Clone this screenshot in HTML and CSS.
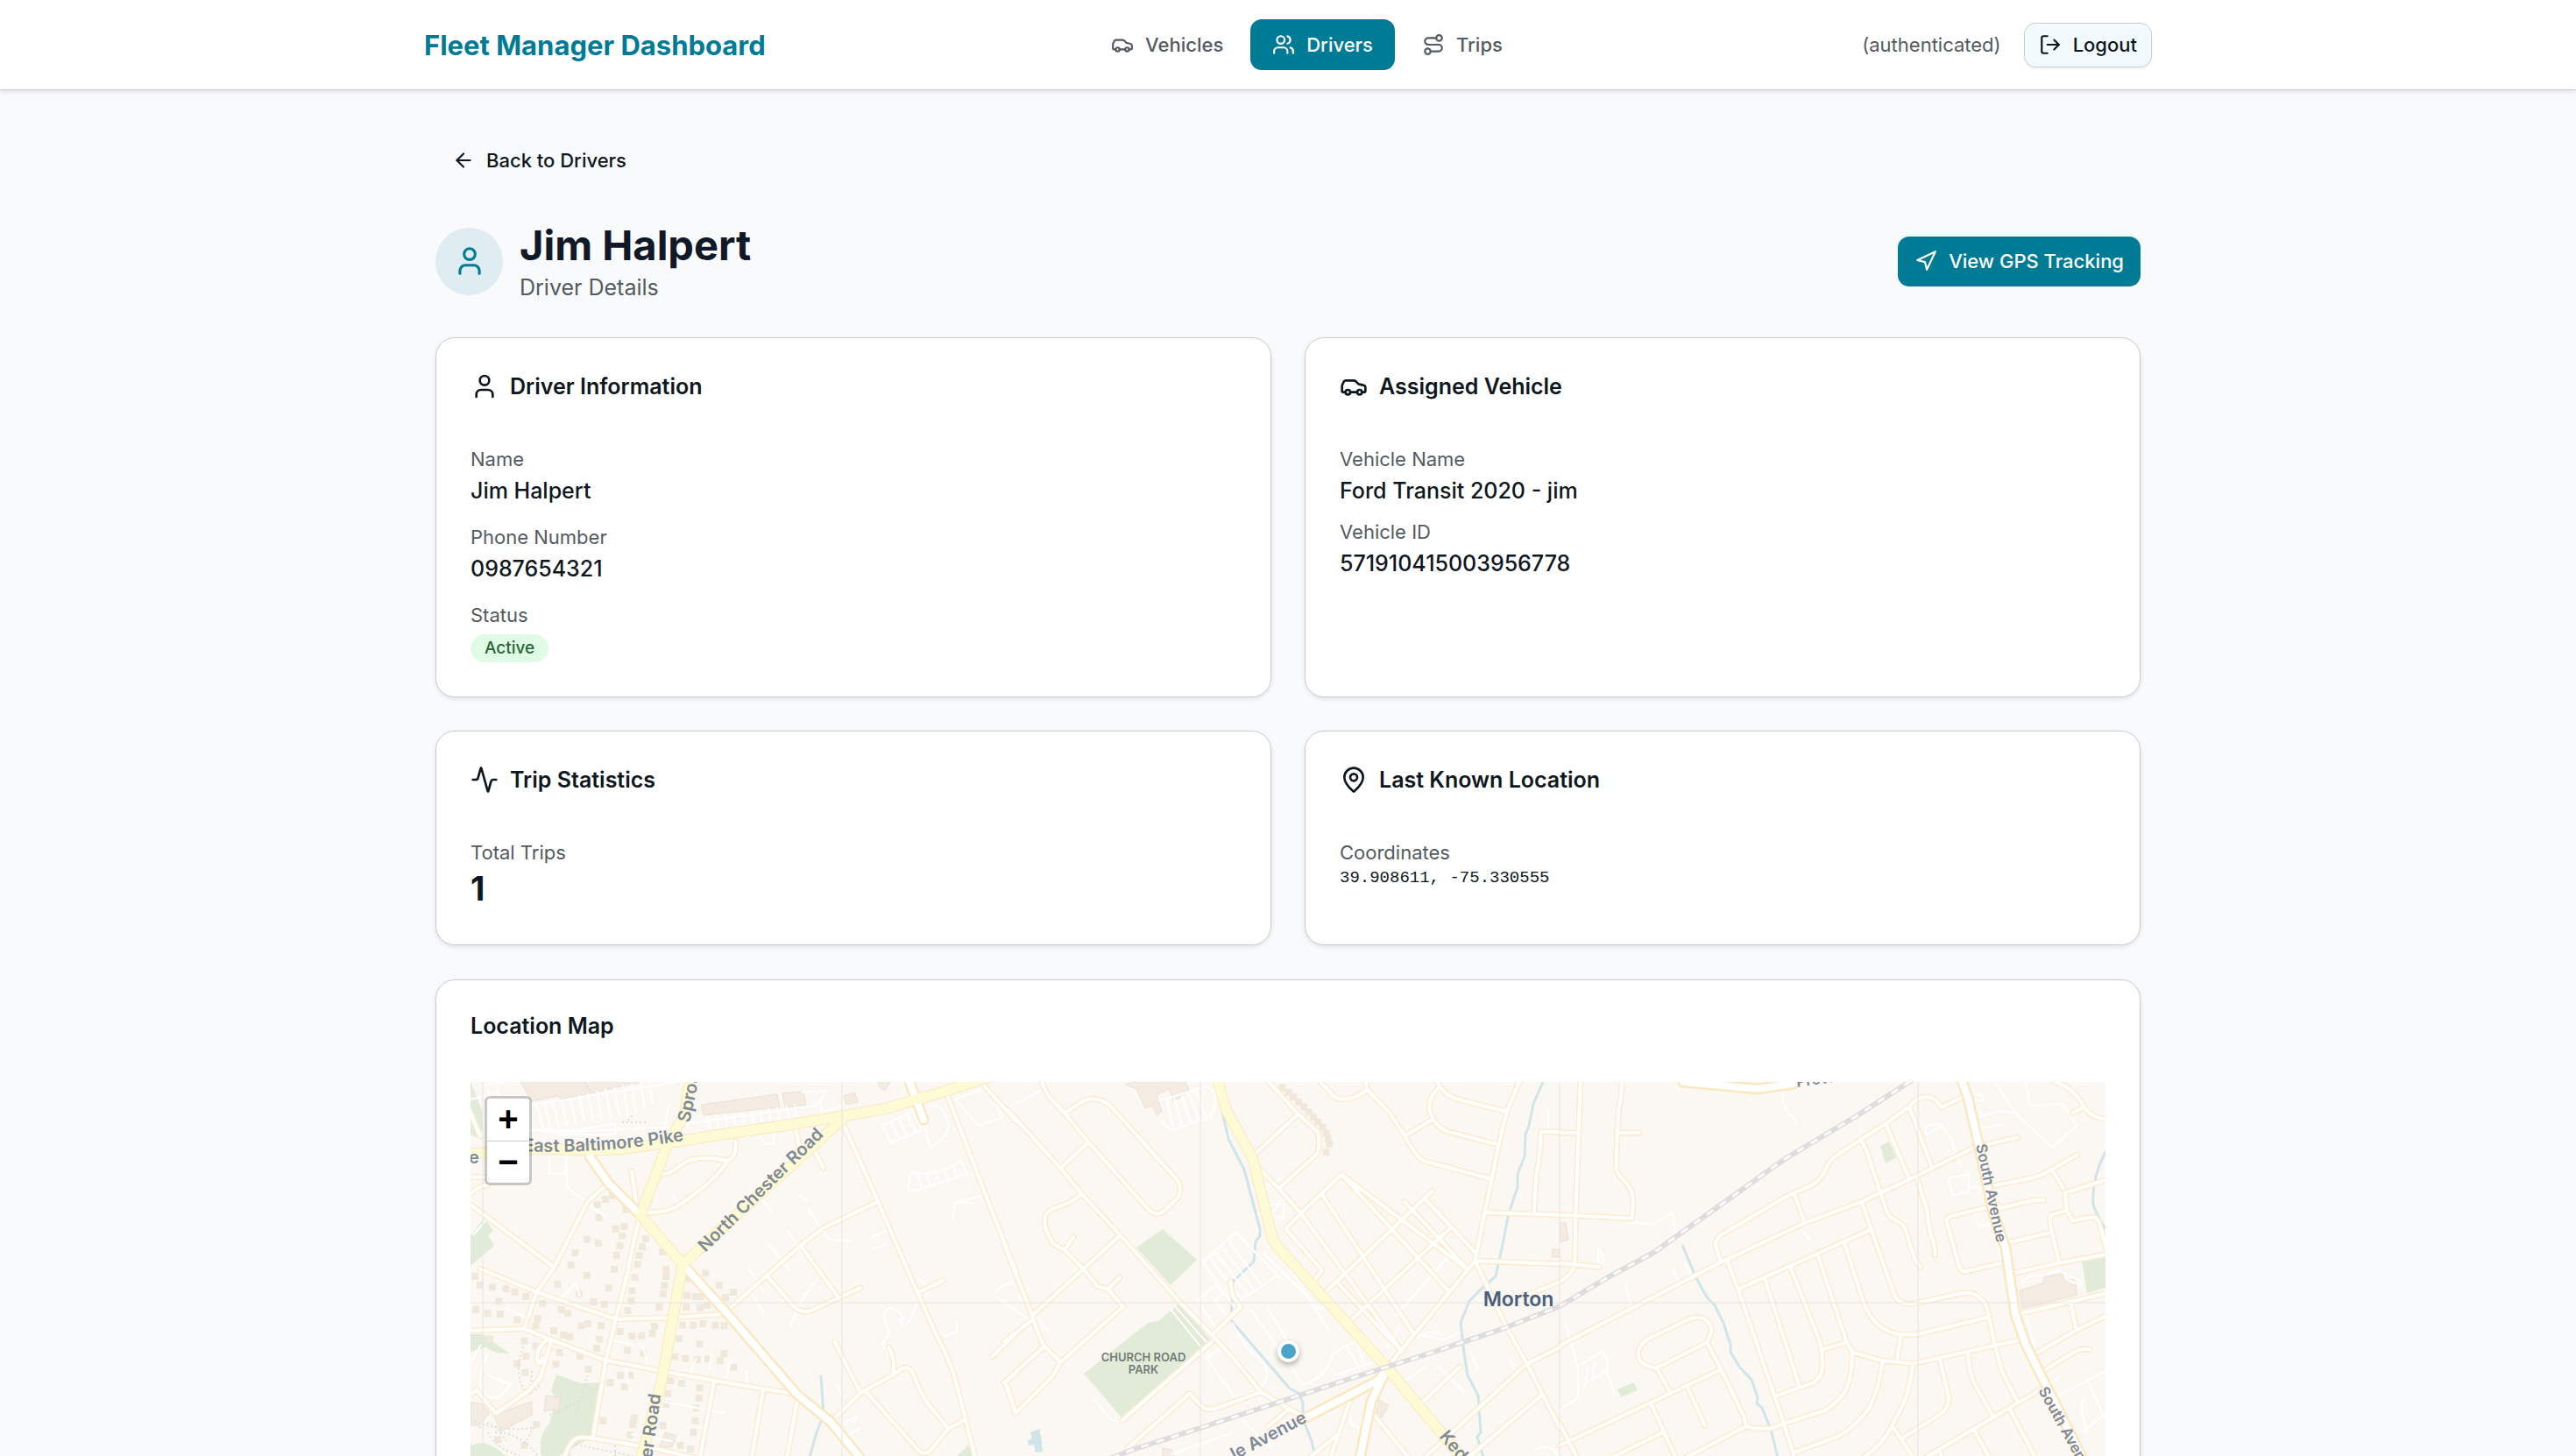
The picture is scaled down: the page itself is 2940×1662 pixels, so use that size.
FILE: index.html
```html
<!DOCTYPE html>
<html lang="en">
<head>
<meta charset="utf-8">
<meta name="viewport" content="width=device-width, initial-scale=1">
<title>Fleet Manager Dashboard</title>
<link rel="stylesheet" href="styles.css">
</head>
<body>
<svg class="sprite" aria-hidden="true">
  <symbol id="i-car" viewBox="0 0 24 24"><path d="M19 17h2c.6 0 1-.4 1-1v-3c0-.9-.7-1.7-1.5-1.9C18.7 10.6 16 10 16 10s-1.300-1.400-2.200-2.300c-.5-.4-1.100-.7-1.800-.7H5c-.6 0-1.100.4-1.400.9l-1.400 2.900A3.700 3.700 0 0 0 2 12v4c0 .6.4 1 1 1h2"/><circle cx="7" cy="17" r="2"/><path d="M9 17h6"/><circle cx="17" cy="17" r="2"/></symbol>
  <symbol id="i-users" viewBox="0 0 24 24"><path d="M16 21v-2a4 4 0 0 0-4-4H6a4 4 0 0 0-4 4v2"/><path d="M16 3.128a4 4 0 0 1 0 7.744"/><path d="M22 21v-2a4 4 0 0 0-3-3.870"/><circle cx="9" cy="7" r="4"/></symbol>
  <symbol id="i-route" viewBox="0 0 24 24"><circle cx="6" cy="19" r="3"/><path d="M9 19h8.500a3.500 3.500 0 0 0 0-7h-11a3.500 3.500 0 0 1 0-7H15"/><circle cx="18" cy="5" r="3"/></symbol>
  <symbol id="i-logout" viewBox="0 0 24 24"><path d="m16 17 5-5-5-5"/><path d="M21 12H9"/><path d="M9 21H5a2 2 0 0 1-2-2V5a2 2 0 0 1 2-2h4"/></symbol>
  <symbol id="i-back" viewBox="0 0 24 24"><path d="m12 19-7-7 7-7"/><path d="M19 12H5"/></symbol>
  <symbol id="i-user" viewBox="0 0 24 24"><path d="M19 21v-2a4 4 0 0 0-4-4H9a4 4 0 0 0-4 4v2"/><circle cx="12" cy="7" r="4"/></symbol>
  <symbol id="i-nav" viewBox="0 0 24 24"><polygon points="3 11 22 2 13 21 11 13 3 11"/></symbol>
  <symbol id="i-activity" viewBox="0 0 24 24"><path d="M22 12h-2.480a2 2 0 0 0-1.930 1.460l-2.350 8.360a.25.25 0 0 1-.48 0L9.240 2.180a.25.25 0 0 0-.48 0l-2.350 8.360A2 2 0 0 1 4.490 12H2"/></symbol>
  <symbol id="i-pin" viewBox="0 0 24 24"><path d="M20 10c0 4.993-5.539 10.193-7.399 11.799a1 1 0 0 1-1.202 0C9.539 20.193 4 14.993 4 10a8 8 0 0 1 16 0"/><circle cx="12" cy="10" r="3"/></symbol>
</svg>

<header class="topbar">
  <div class="topbar-inner">
    <div class="brand">Fleet Manager Dashboard</div>
    <nav class="nav" aria-label="Main">
      <a class="nav-link" href="#vehicles"><svg class="icon"><use href="#i-car"/></svg>Vehicles</a>
      <a class="nav-link active" href="#drivers" aria-current="page"><svg class="icon"><use href="#i-users"/></svg>Drivers</a>
      <a class="nav-link" href="#trips"><svg class="icon"><use href="#i-route"/></svg>Trips</a>
    </nav>
    <div class="account">
      <span class="auth">(authenticated)</span>
      <button class="btn btn-outline" type="button"><svg class="icon"><use href="#i-logout"/></svg>Logout</button>
    </div>
  </div>
</header>

<main class="page">
  <button class="btn btn-ghost" type="button"><svg class="icon"><use href="#i-back"/></svg>Back to Drivers</button>

  <div class="page-head">
    <div class="identity">
      <div class="avatar"><svg class="icon icon-xl"><use href="#i-user"/></svg></div>
      <div>
        <h1 class="name">Jim Halpert</h1>
        <p class="subtitle">Driver Details</p>
      </div>
    </div>
    <button class="btn btn-primary" type="button"><svg class="icon"><use href="#i-nav"/></svg>View GPS Tracking</button>
  </div>

  <div class="grid">
    <section class="card">
      <h2 class="card-title"><svg class="icon icon-lg"><use href="#i-user"/></svg>Driver Information</h2>
      <dl class="fields">
        <div><dt>Name</dt><dd>Jim Halpert</dd></div>
        <div><dt>Phone Number</dt><dd>0987654321</dd></div>
        <div><dt>Status</dt><dd class="status"><span class="badge">Active</span></dd></div>
      </dl>
    </section>

    <section class="card">
      <h2 class="card-title"><svg class="icon icon-lg"><use href="#i-car"/></svg>Assigned Vehicle</h2>
      <dl class="fields tight">
        <div><dt>Vehicle Name</dt><dd>Ford Transit 2020 - jim</dd></div>
        <div><dt>Vehicle ID</dt><dd>571910415003956778</dd></div>
      </dl>
    </section>

    <section class="card">
      <h2 class="card-title"><svg class="icon icon-lg"><use href="#i-activity"/></svg>Trip Statistics</h2>
      <dl class="fields">
        <div><dt>Total Trips</dt><dd class="big">1</dd></div>
      </dl>
    </section>

    <section class="card">
      <h2 class="card-title"><svg class="icon icon-lg"><use href="#i-pin"/></svg>Last Known Location</h2>
      <dl class="fields">
        <div><dt>Coordinates</dt><dd class="mono">39.908611, -75.330555</dd></div>
      </dl>
    </section>
  </div>

  <section class="card">
    <h2 class="card-title plain">Location Map</h2>
    <div class="map">
      <svg class="map-canvas" viewBox="0 0 1866 614" preserveAspectRatio="xMidYMid slice" role="img" aria-label="Street map around Morton">
        <defs>
          <g id="streets">
            <g transform="matrix(.4018 0 0 .3333 -7 -15)">
              <path d="M17 465L255 680M410 390L350 455L255 680L205 765L170 890M17 897L170 890L240 925L400 998L560 1035L710 1068L945 1115M45 685L205 765L430 857L590 852L742 840M500 500Q480 590 465 690L430 857L400 1010L365 1265M740 835L955 605L1020 545L1175 455M955 605L1060 780M860 710L940 820Q965 840 990 825L1125 750M500 495C560 490 590 490 630 450C690 400 730 350 748 315M555 358C590 370 610 320 650 310C690 300 730 310 748 315Q775 300 770 250M475 350L492 490M942 210L955 290M990 270L1020 340M1075 185L1175 455L1270 720L1340 910Q1385 1010 1400 1090L1450 1326M1370 85L1480 430L1568 700M1470 50L1568 180M1290 765L1360 725M1500 985L1568 905M1568 1040L1535 1075L1568 1180M1052 935L1125 1110M1040 1210L1125 1110L1215 1050L1245 1025Q1265 1020 1275 1045Q1295 1110 1315 1145L1375 1232M1205 955Q1225 990 1217 1050M1140 1105L1285 1300Q1305 1330 1325 1305L1375 1232L1425 1200M710 1068L668 1340M848 1105L815 1340M948 1120L915 1340M282 1340Q300 1265 330 1262L365 1265L540 1300L660 1335M235 928Q200 960 208 1000Q215 1020 222 990M246 935L215 1060L185 1100L90 1180L35 1100L17 1115M17 430Q40 400 66 398M17 370L65 373M10 130L45 230"/>
            </g>
            <g transform="matrix(.4018 0 0 .3333 613 -15)">
              <path d="M0 140L150 340L210 428L320 570L490 800L580 912L640 990L720 1107L800 1165L845 1195M98 45Q105 80 125 105L162 152L230 252L395 475Q425 515 450 480L485 440Q495 415 485 385L290 125Q245 85 205 118L162 152M230 252L150 340M210 428Q180 460 150 470Q110 485 107 505Q100 540 125 590Q130 605 162 620L215 685L255 745L285 755L328 815L150 1005L130 1050L22 1180L0 1090M320 570L70 845M162 620L187 575M285 755L318 715M-10 600L70 845Q85 910 105 950L150 1005M105 950L-10 1075M70 860L-10 935M632 730L640 780L662 815L580 912M742 45L825 155L880 215Q890 250 880 290L770 410M825 155L697 298M697 320L770 410L833 495L1120 968M888 45L930 98Q960 112 990 95L1022 73M1017 45L1022 73L1085 150L1128 230Q1150 285 1180 315L1375 378M1128 230L1205 175M1220 45L1228 62Q1190 100 1200 150Q1215 200 1250 215L1395 260M1228 62Q1250 95 1280 105L1418 147M1455 40L1418 147L1395 260L1375 378L1355 492L1328 658M833 495L948 362L1305 685M948 362L1090 548L1255 765M893 430L1155 910M833 495L790 548L893 690L865 732M905 762L1205 420M968 870L1258 545M1127 455L1225 580L1305 685M1185 445L1328 630M935 730L1120 968M1080 1020L1328 658L1415 880L1475 1010L1568 1230M1355 492L1568 500M1328 658L1568 668M1515 215H1568M1515 215Q1513 300 1502 360L1495 495M1568 730L1465 780M1568 955L1475 1010L1190 1326M1285 1020L1180 1140M1520 1115L1300 1340M580 935L325 1205M340 1300L517 1112L550 1155Q570 1175 600 1160L720 1107M800 1165L740 1225M975 1130L940 1250L915 1340M940 1250L850 1340M1040 1185L1145 1340"/>
            </g>
            <g transform="matrix(.43367 0 0 .3333 1243 -15)">
              <path d="M55 40L42 505L40 670Q35 700 0 730M163 40Q165 90 155 140L148 340Q150 360 175 390Q195 420 193 460L190 512L0 500M0 220H48M150 219L210 219M0 665L105 679M0 948L425 662L645 528L795 455L935 370L1090 270L1205 235M425 662L410 605Q410 580 430 565L600 435L665 398Q690 380 705 330Q715 310 725 300L792 243L858 188L918 132L940 105Q970 85 992 110L1005 132L1075 88M618 430L645 528M792 243Q810 280 815 310L842 415L860 485Q868 510 885 520Q905 530 910 550L935 655L950 678M858 188L918 370M918 132Q935 170 940 200L978 332M940 370L968 490Q970 550 985 600Q990 620 987 638M470 755L820 550M442 660L470 755L590 1215L620 1340M540 720L632 1090M608 680L685 935Q695 1000 690 1040Q680 1065 668 1075L570 1120M680 640L755 935L770 970Q770 1050 755 1095Q740 1135 700 1170L590 1215L555 1232Q520 1235 490 1225L335 1330M690 962L752 938M750 600L800 800Q820 870 860 895Q885 915 940 910L1130 850M795 455L820 550L880 770Q890 810 930 805L1060 768Q1095 765 1105 785Q1125 800 1130 850L1145 945L1165 1040L1205 1140M770 970L850 1000L930 1010L1075 968L1215 928M898 910L888 1000M850 1000Q840 1100 815 1160Q785 1220 735 1258L620 1312M930 1010Q920 1110 900 1160L875 1222Q850 1290 800 1330M875 1222L935 1340M1000 993L1025 1130Q1020 1170 1000 1185L902 1265M1075 968Q1075 1040 1095 1085L1140 1190M965 1330L1205 1145L1270 1095M1187 1170L1255 1340M1092 1240L1130 1330M1000 1310L1010 1340M255 1025L290 1105M255 1025Q200 1015 208 965Q215 935 240 920L345 855Q395 840 400 900L388 937L255 1025M388 937L425 1030L0 1290M425 1030L485 1190L492 1225M335 1085L382 1222M240 1145L305 1330M272 1245L140 1330M0 1215L45 1330M1135 402L1240 375Q1270 365 1295 345L1362 295M1295 345L1325 408M1155 478L1250 450L1275 450M1155 468L1090 485L1030 505Q1015 510 1020 530L1052 680Q1060 700 1080 690L1175 662M1175 597L1295 560M1195 700L1315 665L1440 635M1330 425L1440 380M1330 425L1335 485L1350 520L1405 508Q1415 510 1420 530L1440 620M1335 485L1295 500Q1285 510 1295 555L1315 665M1300 40Q1350 70 1365 100L1380 130Q1400 170 1440 172M1380 130L1350 152M1215 838L1440 768M1345 800L1360 895M1240 985L1360 895L1440 845M1260 1045L1355 970Q1375 955 1395 962"/>
            </g>
          </g>
          <g id="connectors">
            <path d="M136 85L157 115L194 152M242 208L291 262L373 357L411 388L447 432M501 0L517 43M952 384L1037 340L1047 325M1047 325L1028 365L1015 430M1384 0L1468 8L1510 2M1702 -1L1709 18L1722 75L1738 150L1752 190L1763 265L1775 300L1800 350L1845 440"/>
          </g>
          <g id="arterials">
            <path d="M0 82L75 76L136 78L176 76L242 67L300 58L357 50L425 39L475 30L530 14L590 -5M250 0L244 38L226 68L194 152L242 208L218 342L194 432M425 42L242 208M853 0L863 33L893 88L915 178L920 187L1045 325L1120 415L1135 432"/>
          </g>
          <path id="pike" d="M60 79Q150 83 255 65"/>
          <path id="chester" d="M268 195L425 40"/>
        </defs>

        <rect class="land" width="1866" height="614"/>
        <g class="park">
          <path d="M0 0L14 35V66L0 60ZM0 210L27 187L20 175L26 170L16 155L0 176ZM0 288H14L30 300L45 310L30 309L17 303L0 308Z"/>
          <path d="M92 353L98 334L125 344L149 343L139 405L92 432H82Q75 405 90 390Q96 370 97 360ZM0 415Q20 405 45 432H0ZM550 432L571 412L575 432Z"/>
          <path d="M760 189L790 168L829 203L799 232ZM700 333L773 275L785 273L809 253L846 296L744 384Z"/>
          <path d="M1609 73L1619 68L1627 86L1615 93ZM1839 205L1866 200V235L1845 241ZM1309 351L1328 343L1332 352L1313 360Z"/>
        </g>
        <g class="building">
          <path d="M57 0H195L104 20L100 16L70 22ZM263 26L350 14L353 29L266 38ZM356 13L380 11L383 26L359 29ZM426 16L439 12L442 23L429 26ZM465 0H479L473 10L467 6Z"/>
          <path d="M747 3L758 0H816L820 10L803 22L797 8L783 15L789 34L783 38L778 27L770 30L760 8Z"/>
          <path d="M1768 238L1795 230L1796 222L1816 219L1820 227L1831 225L1834 243L1771 259ZM1243 161H1250L1253 180L1244 183ZM1235 191H1243V200H1234Z"/>
          <path d="M26 380L70 365V380L35 399ZM86 358L103 360L101 373L84 376ZM0 365L14 368L22 378L10 392H0ZM222 400L235 404L230 417H215ZM1037 363L1048 369L1040 383L1033 380ZM790 418L800 420L806 432H790Z"/>
        </g>
        <g class="houses" transform="matrix(.4018 0 0 .3333 -7 -15)">
          <path d="M45 740h0M80 748h0M143 764h0M118 754h0M175 780h0M98 796h0M32 825h0M66 838h0M102 840h0M30 710h0M150 860h0M222 803h0M265 737h0M303 672h0M315 630h0M348 584h0M382 510h0M378 466h0M401 447h0M421 434h0M458 482h0M454 540h0M430 548h0M448 572h0M380 597h0M442 605h0M432 638h0M426 687h0M348 708h0M410 750h0M326 772h0M367 798h0M398 806h0M275 826h0M294 838h0M208 855h0M203 880h0M254 897h0M350 873h0M388 880h0M332 880h0M300 918h0M282 912h0M384 926h0M376 958h0M270 972h0M328 985h0M260 1012h0M352 1028h0M170 932h0M203 950h0M515 582h0M505 610h0M497 640h0M492 670h0M484 715h0M477 760h0M474 795h0M464 828h0M562 627h0M573 686h0M573 712h0M568 742h0M565 770h0M553 816h0M632 718h0M632 776h0M656 780h0M670 780h0M630 817h0M669 818h0M690 810h0M685 700h0M724 742h0M742 783h0M764 765h0M442 900h0M476 916h0M504 914h0M534 907h0M540 882h0M463 964h0M508 974h0M610 925h0M598 986h0M628 992h0M661 996h0M692 994h0M726 1000h0M738 975h0M764 1022h0M620 878h0M650 878h0M678 873h0M713 878h0M738 880h0M668 942h0M443 1050h0M471 1050h0M414 1074h0M455 1090h0M586 1068h0M617 1077h0M668 1093h0M578 1112h0M574 1148h0M667 1128h0M659 1162h0M656 1205h0M650 1245h0M394 1206h0M482 1196h0M479 1218h0M471 1254h0M564 1222h0M614 1290h0M642 1302h0M175 985h0M172 1040h0M150 1010h0M72 924h0M205 1218h0M95 1270h0M170 1290h0"/>
          <path d="M2323 65h0M2341 80h0M2355 97h0M2370 113h0M2384 130h0M2398 148h0M2412 166h0M2425 182h0M2438 201h0M2448 220h0M2453 240h0M2457 257h0M2448 286h0"/>
        </g>
        <g class="water">
          <path d="M400 335L403 380L395 400L386 432M858 34L865 65L883 100L901 168V176L896 182L894 205L870 228L868 272L935 350L946 356L950 367V385L960 410L965 432M1224 0L1213 25L1208 50L1204 60L1203 85L1195 105V120L1185 150L1177 190L1170 222L1155 235L1140 250L1130 275L1134 310L1138 335L1150 358L1153 400L1149 405L1157 432M1383 186L1398 222L1405 235L1412 247L1420 255L1430 275L1438 300L1438 308L1448 325L1462 340L1469 360L1468 367L1474 372L1484 397L1493 432M1866 80Q1850 110 1852 140Q1855 150 1866 168"/>
        </g>
        <path class="pool" d="M639 400L650 396V404L641 408ZM636 409L651 403L653 422L645 423L643 414L637 415Z"/>

        <g class="lanes">
          <path d="M14 4L40 0M0 20L32 12M60 55H120L165 48V60H98M20 8L26 42M30 5L37 42M75 25L84 55M84 23L92 55M94 22L101 52M104 20L110 50M114 18L120 48M124 15L130 45M134 13L140 43M144 10L150 43M154 8L160 42M164 6L170 40M174 4L180 38M184 2L189 36M194 0L199 30M204 0L208 25M60 28L235 0M78 56L105 57L228 52M226 26L222 50M270 40L273 54M280 38L283 52M290 37L293 51M300 36L303 50M310 35L313 49M320 33L323 47M330 32L333 46M340 30L343 44M350 29L353 43M360 27L363 41M370 26L373 40M230 50L395 27L406 10L378 12M330 54Q330 75 345 70L352 38M90 105H107L110 84M90 105L90 85M110 92V120L155 155M400 20V35L425 28"/>
          <path d="M470 50L505 33L515 55L480 70ZM478 44L490 66M488 40L499 62M498 36L508 58M513 35Q535 15 545 45Q550 60 525 75ZM503 103Q495 125 505 125L567 105L560 90Q530 110 503 103M515 122L510 104M525 118L520 103M535 115L530 102M545 112L540 100M555 108L550 95M553 20L590 5L607 40L580 50ZM550 155L553 138H575M553 138L583 130M385 145L410 180L435 182M330 130L345 150M362 170L380 198M340 185L365 215M317 212L335 240M320 240L335 265M460 190L475 185M457 178L475 170M478 285Q465 260 480 258Q500 265 490 275Q500 285 510 250M478 285L470 300L480 315M540 290L555 285V275M395 225Q370 260 365 280M510 225Q525 230 520 245M600 240Q600 235 620 228M100 250L120 230L125 245M40 258L65 270M163 295L185 300M195 300Q205 320 200 330M275 310L272 330M250 335L258 315M290 345L298 315M178 325L180 345M315 330V345M220 365L290 378M20 310Q5 340 15 355Q30 370 45 345L20 335M418 345L425 360M425 390Q450 375 435 390M183 402L230 410M427 405L445 395M3 175L20 155M230 130L240 140M375 130L385 135M0 320L12 300"/>
          <path d="M613 30L655 8M788 45L800 55L845 40L852 15L840 5L785 22M795 20L802 53M803 18L812 50M812 16L822 48M820 13L832 44M828 10L840 41M850 10V35M910 118L925 110M912 140H928V155L915 153M905 165L925 135M836 206L873 171L925 225M836 206L870 255L920 222M843 200L880 248M850 194L888 244M857 187L895 238M864 180L903 232M870 228L850 250L865 270L880 258M830 250L850 232L860 240M830 250L855 288M905 195L970 260L985 250M920 187L980 285M890 260L925 308L950 345Q975 340 985 310L1010 295M910 258L935 300M870 275Q880 300 900 315Q915 330 905 345Q870 370 865 350L840 315Q850 305 860 308M798 258L838 308M804 256L844 302M985 335L1030 320M1010 295L1020 320M1000 303L1014 325M1045 305L1060 280M960 370Q970 385 990 375M710 360L730 385L745 390M800 425L870 400M880 385L915 420M1005 380Q1000 390 1015 395M1120 195L1055 268M1070 285L1110 295L1130 285M1080 292Q1100 280 1110 290M1060 345L1090 325M1105 325L1135 355M1185 315L1195 335M1230 32V58M1215 420Q1235 410 1243 430M640 235L625 245L660 285M600 245L635 270M1140 305L1150 330"/>
          <path d="M1497 5Q1497 35 1510 40L1513 48M1318 162L1330 160L1348 163L1371 150Q1375 160 1374 175M1372 212L1382 235M1385 205L1393 222M1318 232L1325 257M1287 190Q1295 200 1293 207H1287ZM1249 275L1264 325V360L1243 375M1264 325L1292 307L1298 320L1297 330L1306 358M1270 345L1296 330M1275 325L1272 348M1283 320L1280 342M1661 60L1680 50L1690 65L1700 95M1661 60V50L1680 48M1725 15H1720M1710 15Q1730 10 1725 22L1712 20M1722 40L1745 33L1763 35L1740 0M1775 0L1780 27L1817 25L1834 50L1805 75L1763 35M1720 55L1740 50L1752 48M1687 110L1710 105V125L1692 130ZM1710 120L1740 122M1715 145L1722 165L1735 163M1743 185L1748 210M1770 230L1778 222L1800 220L1813 215L1838 228V232L1820 225M1775 265L1787 310M1800 365L1866 330M1845 340L1866 385M1813 337L1790 355M1840 400L1866 378M1845 400Q1835 370 1842 360M1520 170L1530 182"/>
        </g>
        <g class="footpath">
          <path d="M60 302Q50 330 60 350Q70 360 80 345M0 385Q30 400 70 395M28 400Q60 400 80 432M70 330L68 360M90 380Q120 370 148 348M135 330L120 380M20 400Q30 420 60 428M120 414L190 428M110 415L115 432M165 415V432M130 0L138 12M173 46H200M180 44L185 38M75 390L60 415M10 395Q25 380 40 410"/>
        </g>

        <use class="street-case" href="#streets"/>
        <use class="street" href="#streets"/>
        <use class="arterial-case" href="#connectors"/>
        <use class="arterial-case" href="#arterials"/>
        <use class="connector" href="#connectors"/>
        <use class="arterial" href="#arterials"/>
        <path class="rail" d="M715 436L755 420L830 396L900 373L1000 340L1100 308L1180 281L1243 256L1300 222L1350 195L1430 138L1500 88L1580 40L1650 -5"/>
        <path class="rail-dash" d="M715 436L755 420L830 396L900 373L1000 340L1100 308L1180 281L1243 256L1300 222L1350 195L1430 138L1500 88L1580 40L1650 -5"/>
        <path class="seam" d="M14 0V614M424 0V614M833 0V614M1243 0V614M1652 0V614M0 252H1866"/>

        <g class="road-label">
          <text><textPath href="#pike">East Baltimore Pike</textPath></text>
          <text><textPath href="#chester">North Chester Road</textPath></text>
          <text transform="translate(-2 93)">e</text>
          <text transform="translate(250 47) rotate(-78)">Sproul</text>
          <text transform="translate(207 430) rotate(-82)">er Road</text>
          <text transform="translate(872 432) rotate(-28)">le Avenue</text>
          <text transform="translate(1105 405) rotate(50)">Kedron</text>
          <text class="small" transform="translate(1514 6) rotate(-8)">Providence</text>
          <text class="small" transform="translate(1718 72) rotate(78)">South Avenue</text>
          <text class="small" transform="translate(1789 352) rotate(61)">South Avenue</text>
        </g>
        <g class="park-label" text-anchor="middle">
          <text x="768" y="319">CHURCH ROAD</text>
          <text x="768" y="333">PARK</text>
        </g>
        <text class="town-label" x="1196" y="256" text-anchor="middle">Morton</text>
      </svg>
      <div class="zoom">
        <button type="button" aria-label="Zoom in">+</button>
        <button type="button" aria-label="Zoom out">−</button>
      </div>
      <div class="marker"></div>
    </div>
  </section>
</main>
</body>
</html>
```
FILE: styles.css
```css
* { box-sizing: border-box; }

body {
  margin: 0;
  background: #f9fafc;
  color: #0e171d;
  font-family: Inter, "Liberation Sans", sans-serif;
  font-size: 25px;
  line-height: 40px;
}

h1, h2, p, dl, dd { margin: 0; }
button { font: inherit; color: inherit; cursor: pointer; }

.sprite { position: absolute; width: 0; height: 0; }

.icon {
  width: 26px;
  height: 26px;
  flex: none;
  fill: none;
  stroke: currentColor;
  stroke-width: 2;
  stroke-linecap: round;
  stroke-linejoin: round;
}
.icon-lg { width: 32px; height: 32px; }
.icon-xl { width: 38px; height: 38px; }

/* Top bar */
.topbar {
  background: #fff;
  border-bottom: 1px solid #c8ccd2;
  box-shadow: 0 2px 5px rgba(0, 0, 0, .1);
}
.topbar-inner {
  max-width: 2048px;
  margin: 0 auto;
  padding: 22px 38px;
  display: flex;
  align-items: center;
  justify-content: space-between;
}
.brand {
  color: #007b95;
  font-size: 31px;
  font-weight: 700;
  line-height: 45px;
}
.nav { display: flex; gap: 6px; }
.nav-link {
  display: flex;
  align-items: center;
  gap: 13px;
  height: 58px;
  padding: 0 25px;
  border-radius: 13px;
  color: #535a60;
  font-size: 22px;
  font-weight: 500;
  text-decoration: none;
}
.nav-link.active { background: #007b95; color: #fff; }
.account { display: flex; align-items: center; gap: 26px; padding-left: 16px; }
.auth { color: #535a60; font-size: 22px; }

/* Buttons */
.btn {
  display: inline-flex;
  align-items: center;
  gap: 13px;
  height: 57px;
  padding: 0 19px;
  border: 0;
  border-radius: 13px;
  background: none;
  font-size: 22px;
  font-weight: 500;
  line-height: 32px;
}
.btn-outline {
  height: 51px;
  padding: 0 16px;
  border: 1px solid #c8cfd4;
  background: #f3fafd;
  box-shadow: 0 2px 3px rgba(0, 0, 0, .05);
}
.btn-primary { background: #007b95; color: #fff; }
.btn-ghost { align-self: flex-start; }

/* Page */
.page {
  max-width: 2048px;
  margin: 0 auto;
  padding: 51px;
  display: flex;
  flex-direction: column;
  gap: 39px;
}
.page-head { display: flex; align-items: center; justify-content: space-between; }
.identity { display: flex; align-items: center; gap: 19px; }
.avatar {
  width: 77px;
  height: 77px;
  border-radius: 50%;
  background: #dfecf1;
  color: #007b95;
  display: grid;
  place-items: center;
}
.name { color: #111827; font-size: 47px; font-weight: 700; line-height: 60px; }
.subtitle { color: #535a60; line-height: 36px; }

.grid { display: grid; grid-template-columns: 1fr 1fr; gap: 38px; }
.card {
  padding: 39px;
  border: 1px solid #c9ced3;
  border-radius: 22px;
  background: #fff;
  box-shadow: 0 2px 5px rgba(0, 0, 0, .1);
}
.card-title {
  display: flex;
  align-items: center;
  gap: 13px;
  margin-bottom: 51px;
  font-size: 25px;
  font-weight: 600;
  line-height: 32px;
}
.card-title.plain { line-height: 26px; }

.fields { display: flex; flex-direction: column; gap: 17px; }
.fields.tight { gap: 11px; }
dt { color: #535a60; font-size: 22px; line-height: 32px; }
dd { font-weight: 500; }
.status { padding-top: 6px; line-height: 32px; display: flex; }
.badge {
  padding: 0 16px;
  border-radius: 16px;
  background: #dffbe5;
  color: #276534;
  font-size: 19px;
}
.big { font-size: 38px; font-weight: 700; line-height: 50px; }
.mono {
  font-family: "Liberation Mono", monospace;
  font-size: 19px;
  font-weight: 400;
  line-height: 26px;
}

/* Map */
.map { position: relative; height: 614px; overflow: hidden; }
.map-canvas { display: block; width: 100%; height: 100%; }
.map-canvas path { vector-effect: non-scaling-stroke; }
.land { fill: #fbf8f3; }
.park { fill: #e1ebd8; }
.building { fill: #f4ece2; stroke: #ebe1d5; stroke-width: 1; }
.houses { fill: none; stroke: #f1e8dc; stroke-width: 8; stroke-linecap: square; }
.water { fill: none; stroke: #cfe5e9; stroke-width: 3; stroke-linejoin: round; }
.pool { fill: #cfe5e9; }
.lanes { fill: none; stroke: #fff; stroke-width: 2; }
.footpath { fill: none; stroke: #dfdedf; stroke-width: 2; stroke-dasharray: 2 3; }
.street-case, .street, .arterial-case, .connector, .arterial {
  fill: none;
  stroke-linecap: round;
  stroke-linejoin: round;
}
.street-case { stroke: #fdebcf; stroke-width: 7; }
.street { stroke: #fff; stroke-width: 4; }
.arterial-case { stroke: #fce8c0; stroke-width: 13; }
.connector { stroke: #fff; stroke-width: 8; }
.arterial { stroke: #fdfbd6; stroke-width: 11; }
.rail { fill: none; stroke: #dddddd; stroke-width: 6; }
.rail-dash { fill: none; stroke: #fbfbfb; stroke-width: 3; stroke-dasharray: 9 9; }
.seam { fill: none; stroke: #e6e4e1; stroke-width: 1; }
.road-label, .park-label, .town-label {
  font-family: Inter, "Open Sans", sans-serif;
  font-weight: 600;
}
.road-label { fill: #7f8998; font-size: 20px; }
.road-label .small { font-size: 17px; }
.park-label { fill: #747b78; font-size: 13px; }
.town-label { fill: #4a5f7c; font-size: 23px; }

.zoom {
  position: absolute;
  top: 16px;
  left: 16px;
  width: 54px;
  border: 3px solid rgba(0, 0, 0, .2);
  border-radius: 6px;
  background: #fff;
  background-clip: padding-box;
}
.zoom button {
  display: block;
  width: 48px;
  height: 48px;
  padding: 6px 0 0;
  border: 0;
  background: none;
  color: #000;
  font: 700 40px/42px "Liberation Mono", monospace;
}
.zoom button + button { border-top: 1px solid #ccc; }

.marker {
  position: absolute;
  top: 50%;
  left: 50%;
  width: 25px;
  height: 25px;
  margin: -12px;
  border: 4px solid #fff;
  border-radius: 50%;
  background: #4aa3c8;
  box-shadow: 0 3px 6px rgba(0, 0, 0, .3);
}
```
